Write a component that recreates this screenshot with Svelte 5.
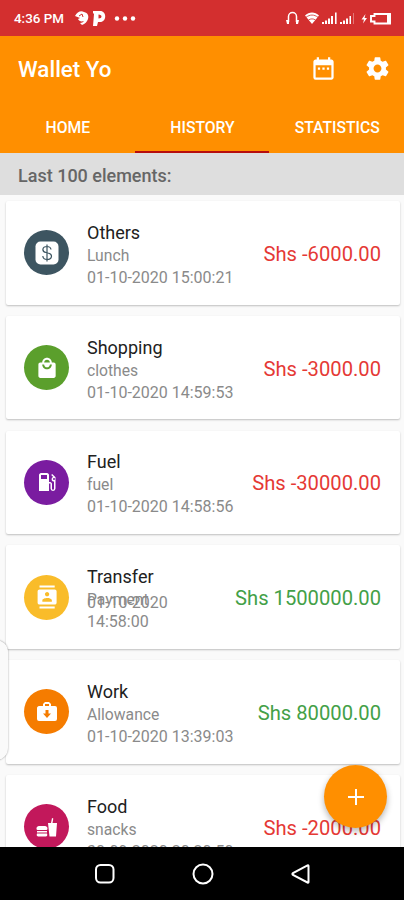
<script lang="ts">
    type Entry = {
        category: string;
        note: string;
        date: string;
        amount: string;
        income?: boolean;
        color: string;
        icon: string;
    };

    const tabs = ['HOME', 'HISTORY', 'STATISTICS'];
    let active = $state('HISTORY');

    const entries: Entry[] = [
        { category: 'Others', note: 'Lunch', date: '01-10-2020 15:00:21', amount: 'Shs -6000.00', color: '#3d5561', icon: 'money' },
        { category: 'Shopping', note: 'clothes', date: '01-10-2020 14:59:53', amount: 'Shs -3000.00', color: '#5b9f2c', icon: 'bag' },
        { category: 'Fuel', note: 'fuel', date: '01-10-2020 14:58:56', amount: 'Shs -30000.00', color: '#7a1ca0', icon: 'fuel' },
        { category: 'Transfer', note: 'Payment', date: '01-10-2020 14:58:00', amount: 'Shs 1500000.00', income: true, color: '#f9bc2a', icon: 'contact' },
        { category: 'Work', note: 'Allowance', date: '01-10-2020 13:39:03', amount: 'Shs 80000.00', income: true, color: '#f57c00', icon: 'work' },
        { category: 'Food', note: 'snacks', date: '30-09-2020 20:20:50', amount: 'Shs -2000.00', color: '#c2185b', icon: 'food' }
    ];
</script>

<div class="screen">
    <div class="status">
        <span class="time">4:36 PM</span>
        <svg class="notif" width="64" height="18" viewBox="0 0 64 18" fill="#fff">
            <path d="M0 7C2 3 6 1 9 3c4 1 5 4 4 7-1 3-3 5-6 6l-2-2c2 0 3-1 4-2-3 1-5 0-6-2l2-1-5-2Z" />
            <path d="M4 7l3-2 1 3" fill="none" stroke="#d32f2f" stroke-width="1" />
            <path fill-rule="evenodd" d="M18 2h7c7 0 7 11 0 11h-2l-1 4h-4l1-12-1-1V2Zm5.500 3.500v4c4 0 4-4 0-4Z" />
            <circle cx="42" cy="9.500" r="2.200" />
            <circle cx="50" cy="9.500" r="2.200" />
            <circle cx="58" cy="9.500" r="2.200" />
        </svg>
        <svg class="signals" width="108" height="16" viewBox="0 0 108 16" fill="#fff">
            <path d="M4.500 12V6.500a4 4 0 0 1 8 0V12" fill="none" stroke="#fff" stroke-width="1.500" />
            <path d="M2 10h3v4H3zM12 10h3l-1 4h-2z" />
            <path d="M21 5.500c4-4 10-4 14 0l-7 8.500Z" />
            <path d="M22 7.300c4-3 8-3 12 0M24.500 10c2-1.500 5-1.500 7 0" fill="none" stroke="#d32f2f" stroke-width=".8" />
            <path d="M38 12h2v2h-2zM41 10.500h2V14h-2zM44 8.500h2V14h-2zM47 6h2v8h-2zM51 2.500h1.600V14H51z" />
            <path d="M56 12h2v2h-2zM59 10.500h2V14h-2zM62 8.500h2V14h-2zM65.500 6H67v8h-1.500z" />
            <path d="M69 3h1v11h-1z" opacity=".35" />
            <path d="m81.500 4-4 5.500H80l-1 4 4-5.500h-2.500z" />
            <path d="M90.500 4H106v9.500H90.500v-2H87V6h3.500Z" fill="none" stroke="#fff" stroke-width="1.900" />
            <path d="M103 4h4v9.500h-4z" />
        </svg>
    </div>

    <header>
        <div class="toolbar">
            <h1>Wallet Yo</h1>
            <svg width="27" height="27" viewBox="0 0 24 24" fill="#fff">
                <path d="M9 11H7v2h2v-2zm4 0h-2v2h2v-2zm4 0h-2v2h2v-2zm2-7h-1V2h-2v2H8V2H6v2H5c-1.110 0-1.990.9-1.990 2L3 20a2 2 0 0 0 2 2h14c1.100 0 2-.9 2-2V6c0-1.100-.9-2-2-2zm0 16H5V9h14v11z" />
            </svg>
            <svg width="27" height="27" viewBox="0 0 24 24" fill="#fff">
                <path d="M19.430 12.980c.04-.32.070-.64.070-.98s-.03-.66-.07-.98l2.110-1.650c.19-.15.240-.42.120-.64l-2-3.460c-.12-.22-.39-.3-.61-.22l-2.490 1c-.52-.4-1.080-.73-1.690-.98l-.38-2.650C14.460 2.180 14.250 2 14 2h-4c-.25 0-.46.180-.49.420l-.38 2.650c-.61.250-1.170.590-1.690.980l-2.490-1c-.23-.09-.49 0-.61.220l-2 3.460c-.13.220-.07.490.120.640l2.110 1.650c-.04.320-.07.650-.07.980s.03.660.070.980l-2.110 1.650c-.19.150-.24.420-.12.640l2 3.460c.12.220.390.300.610.220l2.490-1c.52.400 1.080.730 1.690.980l.38 2.650c.03.240.240.420.490.420h4c.25 0 .46-.18.490-.42l.38-2.650c.61-.25 1.170-.59 1.690-.98l2.490 1c.23.090.490 0 .61-.22l2-3.460c.12-.22.070-.49-.12-.64l-2.110-1.650zM12 15.500c-1.930 0-3.500-1.570-3.500-3.500s1.570-3.500 3.500-3.500 3.500 1.570 3.500 3.500-1.570 3.500-3.500 3.500z" />
            </svg>
        </div>
        <nav>
            {#each tabs as tab}
                <button class:active={active === tab} onclick={() => (active = tab)}>{tab}</button>
            {/each}
        </nav>
    </header>

    <div class="caption">Last 100 elements:</div>

    <main>
        {#each entries as entry}
            <article>
                <span class="badge" style="background-color: {entry.color}">
                    <svg width="24" height="24" viewBox="0 0 24 24" fill="#fff">
                        {#if entry.icon === 'money'}
                            <rect x=".5" y=".5" width="23" height="23" rx="5" />
                            <path d="M16 8.500c-.3-2-1.700-3-4-3-5 0-5.500 5-1 6l2 .5c5 1 4.500 6.500-1 6.500-2.500 0-4-1.200-4.200-3.500M12 3.500v17" fill="none" stroke="#3d5561" stroke-width="1.200" />
                        {:else if entry.icon === 'bag'}
                            <path transform="translate(.5 .8) scale(.96)" d="M19 6h-2c0-2.760-2.240-5-5-5S7 3.240 7 6H5c-1.100 0-1.990.9-1.990 2L3 20c0 1.100.9 2 2 2h14c1.100 0 2-.9 2-2V8c0-1.100-.9-2-2-2zm-7-3c1.660 0 3 1.340 3 3H9c0-1.660 1.340-3 3-3zm0 10c-2.760 0-5-2.240-5-5h2c0 1.660 1.340 3 3 3s3-1.340 3-3h2c0 2.760-2.240 5-5 5z" />
                        {:else if entry.icon === 'fuel'}
                            <path d="m20.500 7.200-3.300-3.300-1 1 2 2c-1 .4-1.600 1.200-1.600 2.300 0 1.300 1 2.400 2.400 2.400v7.200a1 1 0 0 1-2 0V14c0-1-.8-2-2-2h-1V5c0-1-.8-2-2-2H6C5 3 4 4 4 5v16h10v-7.500h1.500v5a2.500 2.500 0 0 0 5 0ZM12 9H6V5h6v4Zm7 1a1 1 0 1 1 0-2 1 1 0 0 1 0 2Z" />
                        {:else if entry.icon === 'contact'}
                            <path transform="translate(.7 .6) scale(.95)" d="M20 0H4v2h16V0zM4 24h16v-2H4v2zM20 4H4c-1.100 0-2 .9-2 2v12c0 1.100.9 2 2 2h16c1.100 0 2-.9 2-2V6c0-1.100-.9-2-2-2zm-8 2.750c1.240 0 2.250 1.010 2.250 2.250s-1.010 2.250-2.250 2.250S9.750 10.240 9.750 9 10.760 6.750 12 6.750zM17 17H7v-1.500c0-1.670 3.330-2.500 5-2.500s5 .83 5 2.500V17z" />
                        {:else if entry.icon === 'work'}
                            <path fill-rule="evenodd" d="M8 6V4l2-2h4l2 2v2h4a2 2 0 0 1 2 2v11a2 2 0 0 1-2 2H4a2 2 0 0 1-2-2V8c0-1 1-2 2-2h4Zm2 0h4V4h-4v2Zm.5 4v3.500H8l4 4.500 4-4.500h-2.500V10h-3Z" />
                        {:else}
                            <path d="M13 8h3l1-5 1.300.4-.8 4.600H22l-1 13.500h-6.500L13 8ZM4 11h6c3 0 3 4 1.500 4h-9C1 15 1 11 4 11Zm-2 5h10v1.500H2V16Zm0 2.500h10c1 3-1 3-2 3H4c-1 0-3 0-2-3Z" />
                            <path d="M6 15.500h4" stroke="#c2185b" stroke-width="1" />
                        {/if}
                    </svg>
                </span>
                <div class="details">
                    <div class="title">
                        <h2>{entry.category}</h2>
                        <p>{entry.note}</p>
                    </div>
                    <time>{entry.date}</time>
                </div>
                <span class="amount" class:income={entry.income}>{entry.amount}</span>
            </article>
        {/each}
    </main>

    <div class="drawer-edge"></div>

    <button class="add" aria-label="Add">
        <svg width="18" height="18" viewBox="0 0 18 18" stroke="#fff" stroke-width="2">
            <path d="M9 1v16M1 9h16" />
        </svg>
    </button>

    <footer>
        <svg width="22" height="22" viewBox="0 0 22 22">
            <rect x="2" y="2" width="17.500" height="17.500" rx="4.500" />
        </svg>
        <svg width="22" height="22" viewBox="0 0 22 22">
            <circle cx="11" cy="11" r="9.500" />
        </svg>
        <svg width="22" height="22" viewBox="0 0 22 22">
            <path d="M18.500 3v16q0 1-1 .5L3 12q-1.200-1 0-2L17.500 2.300q1-.5 1 .7Z" />
        </svg>
    </footer>
</div>

<style>
    :global(body) {
        margin: 0;
        font-family: Roboto, sans-serif;
    }

    .screen {
        position: relative;
        width: 404px;
        height: 900px;
        display: flex;
        flex-direction: column;
        overflow: hidden;
        background-color: #fafafa;
    }

    .status {
        flex: none;
        height: 36px;
        padding: 0 12px 0 14px;
        box-sizing: border-box;
        display: flex;
        align-items: center;
        background-color: #d32f2f;
        color: #fff;
    }

    .time {
        width: 61px;
        font-size: 13.4px;
        font-weight: 500;
        white-space: nowrap;
    }

    .signals {
        margin-left: auto;
    }

    header {
        flex: none;
        height: 117px;
        display: flex;
        flex-direction: column;
        background-color: #ff8f00;
        color: #fff;
    }

    .toolbar {
        height: 65px;
        padding: 0 13px 0 18px;
        display: flex;
        align-items: center;
        gap: 27px;
    }

    h1 {
        flex: 1;
        margin: 0;
        font-size: 22.4px;
        font-weight: 500;
    }

    nav {
        flex: 1;
        display: grid;
        grid-template-columns: repeat(3, 1fr);
    }

    nav button {
        border: 0;
        border-bottom: 2px solid transparent;
        padding: 2px 0 0 1px;
        background: none;
        color: #fff;
        font-family: inherit;
        font-size: 15.7px;
        font-weight: 500;
    }

    nav button.active {
        border-color: #b70d0d;
    }

    .caption {
        flex: none;
        height: 42px;
        padding: 2px 18px 0;
        box-sizing: border-box;
        line-height: 41px;
        background-color: #dedede;
        color: #666;
        font-size: 18px;
        font-weight: 500;
    }

    main {
        flex: 1;
        min-height: 0;
        padding: 6px 4px 0 6px;
        display: flex;
        flex-direction: column;
        gap: 11.25px;
        overflow: hidden;
    }

    article {
        flex: none;
        height: 103.5px;
        padding: 0 19px 0 18px;
        box-sizing: border-box;
        display: flex;
        align-items: center;
        border-radius: 2px;
        background-color: #fff;
        box-shadow: 0 1px 2px rgba(0, 0, 0, 0.24);
    }

    .badge {
        flex: none;
        width: 45px;
        height: 45px;
        margin-right: 18px;
        display: grid;
        place-items: center;
        border-radius: 50%;
    }

    .details {
        flex: 1;
        display: grid;
        height: 66px;
        margin-right: 8px;
        padding-top: 2px;
    }

    /* note and date share one cell, the date grows upwards when it wraps */
    .title, time {
        grid-area: 1 / 1;
    }

    h2, p {
        margin: 0;
        font-weight: 400;
    }

    h2 {
        line-height: 24px;
        color: #212121;
        font-size: 18px;
    }

    p {
        line-height: 22px;
    }

    p, time {
        color: #8a8a8a;
        font-size: 15.7px;
    }

    time {
        align-self: end;
        font-size: 16px;
        line-height: 19px;
    }

    .amount {
        flex: none;
        padding-top: 2px;
        color: #e53935;
        font-size: 20.2px;
    }

    .amount.income {
        color: #43a047;
    }

    .drawer-edge {
        position: absolute;
        left: -22px;
        top: 640px;
        width: 30px;
        height: 120px;
        border-radius: 12px;
        background-color: #fafafa;
        box-shadow: 0 0 2px rgba(0, 0, 0, 0.4);
    }

    .add {
        position: absolute;
        right: 17px;
        bottom: 72px;
        width: 63px;
        height: 63px;
        border: 0;
        padding: 0;
        display: grid;
        place-items: center;
        border-radius: 50%;
        background-color: #ff8f00;
        box-shadow: 0 3px 6px rgba(0, 0, 0, 0.3);
    }

    footer {
        flex: none;
        height: 53px;
        padding-left: 1px;
        display: flex;
        justify-content: center;
        align-items: center;
        gap: 76px;
        background-color: #000;
    }

    footer svg {
        fill: none;
        stroke: #fff;
        stroke-width: 2;
    }
</style>
